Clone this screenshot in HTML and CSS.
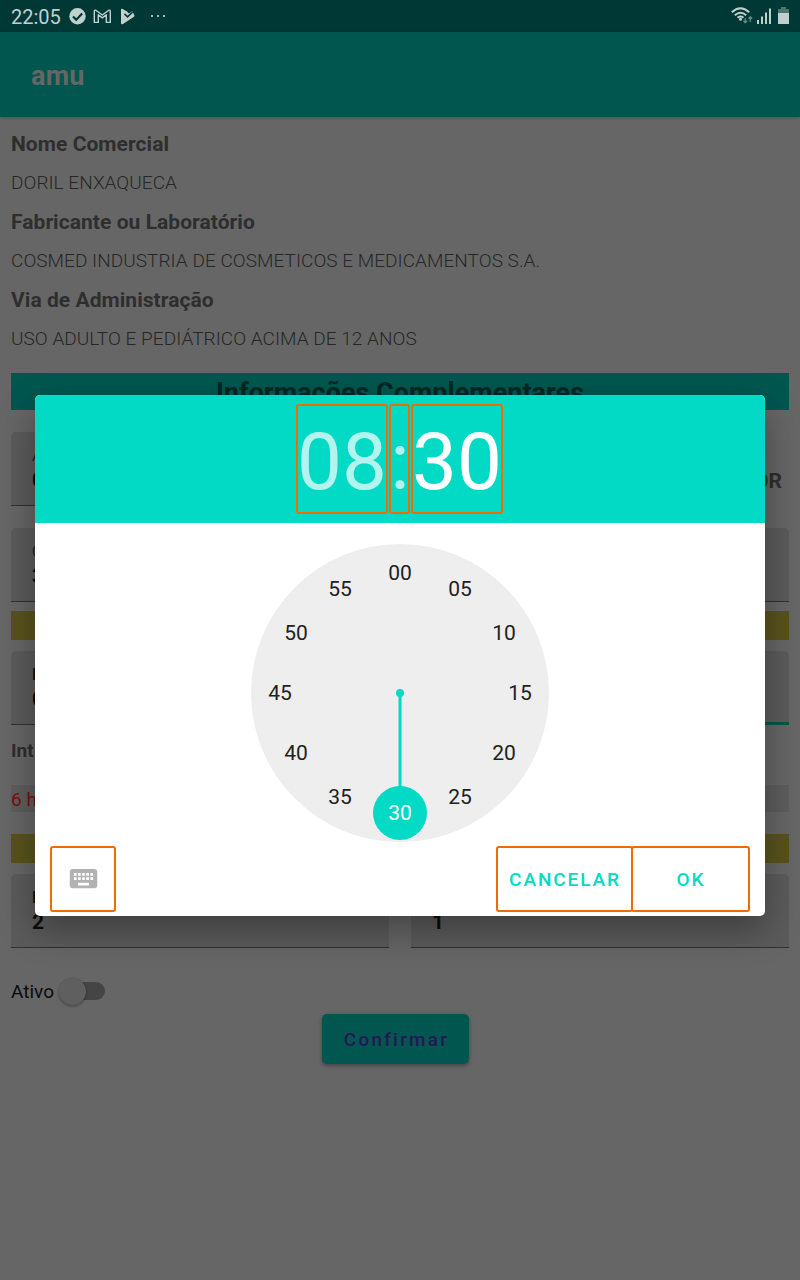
FILE: index.html
```html
<!DOCTYPE html>
<html lang="pt-BR">
<head>
<meta charset="utf-8">
<title>amu</title>
<link rel="stylesheet" href="styles.css">
</head>
<body>
<div class="status">
  <span class="clock-text">22:05</span>
  <svg class="status-left" width="100" height="32" viewBox="0 0 100 32">
    <circle cx="10.5" cy="16.3" r="8.2" fill="#c0d0cf"/>
    <path d="M6 16.5l3.2 3.2 6-6.2" fill="none" stroke="#003835" stroke-width="2.2"/>
    <path d="M27.3 22.4V11.2q0-1.4 1.5-1L35.3 15l6.5-4.8q1.5-.4 1.5 1v11.2h-4v-7.6l-4 3.1-4-3.1v7.6z" fill="none" stroke="#c0d0cf" stroke-width="1.4" stroke-linejoin="round"/>
    <path d="M54 9.3q0-1 1.2-.5L60 11.5l2 2 3.5-2.5 1.5 3.7q1.2 1 0 2L56 24q-2 .8-2-1z" fill="#c0d0cf"/>
    <path d="M57.5 13.9l3 3 5.5-5.2" fill="none" stroke="#003835" stroke-width="1.5"/>
    <path d="M84 15h2v2h-2zM90 15h2v2h-2zM96 15h2v2h-2z" fill="#a4bbb9"/>
  </svg>
  <svg class="status-right" width="60" height="32" viewBox="0 0 60 32">
    <g fill="none" stroke="#c0d0cf" stroke-width="1.9"><path d="M1.8 12.2q8.7-8 17.4 0"/><path d="M4.8 15.2q5.7-5 11.4 0"/><path d="M7.5 17.8q3-2.4 6 0"/></g>
    <circle cx="10.5" cy="19.3" r="1.5" fill="#c0d0cf"/>
    <path d="M15.3 18v4.5M13.5 20.8l1.8 2 1.8-2M20.3 22v-5M18.5 18.7l1.8-2 1.8 2" fill="none" stroke="#668985" stroke-width="1.3"/>
    <path d="M27 20h2v4h-2zM31 16.5h2V24h-2zM35 12.5h2V24h-2zM39 8.5h2V24h-2z" fill="#c0d0cf"/>
    <path d="M51 7h5v2h3v4.5H48V9h3z" fill="#4d7572"/><path d="M48 13h11v11H48z" fill="#c0d0cf"/>
  </svg>
</div>
<header class="appbar">amu</header>
<main class="content">
  <div class="label">Nome Comercial</div>
  <div class="value">DORIL ENXAQUECA</div>
  <div class="label">Fabricante ou Laboratório</div>
  <div class="value">COSMED INDUSTRIA DE COSMETICOS E MEDICAMENTOS S.A.</div>
  <div class="label">Via de Administração</div>
  <div class="value">USO ADULTO E PEDIÁTRICO ACIMA DE 12 ANOS</div>
  <h2 class="section">Informações Complementares</h2>
  <div class="pair">
    <div class="field"><small>A</small><b>0</b></div>
    <div class="side">OR</div>
  </div>
  <div class="field second"><small>Q</small><b>3</b></div>
  <div class="stripe"></div>
  <div class="pair times">
    <div class="field"><small class="strong">I</small><b>0</b></div>
    <div class="field active"></div>
  </div>
  <div class="interval">Int</div>
  <div class="choice">6 h</div>
  <div class="stripe lower"></div>
  <div class="pair doses">
    <div class="field"><small class="strong">I</small><b>2</b></div>
    <div class="field"><b>1</b></div>
  </div>
  <div class="switch-row">Ativo<span class="switch"><span class="track"></span><span class="thumb"></span></span></div>
  <div class="confirm">Confirmar</div>
</main>
<section class="dialog">
  <div class="time">
    <span class="hour box">08</span><span class="colon box">:</span><span class="minute box">30</span>
  </div>
  <svg class="dial" width="300" height="300" viewBox="-150 -150 300 300">
    <circle r="149" fill="#eee"/>
    <path d="M0 0V100" stroke="#03dac5" stroke-width="3"/>
    <circle r="4" fill="#03dac5"/><circle cy="120" r="27" fill="#03dac5"/>
    <g class="numbers" transform="translate(0 -1)">
      <text x="0" y="-112.5">00</text><text x="60" y="-96.5">05</text><text x="104" y="-52.5">10</text>
      <text x="120" y="7.5">15</text><text x="104" y="67.5">20</text><text x="60" y="111.5">25</text>
      <text class="selected" x="0" y="127.5">30</text><text x="-60" y="111.5">35</text><text x="-104" y="67.5">40</text>
      <text x="-120" y="7.5">45</text><text x="-104" y="-52.5">50</text><text x="-60" y="-96.5">55</text>
    </g>
  </svg>
  <div class="actions">
    <div class="box keyboard"><svg width="33" height="33" viewBox="0 0 24 24"><path fill="#b2b2b2" d="M20 5H4c-1.1 0-1.99.9-1.99 2L2 17c0 1.1.9 2 2 2h16c1.1 0 2-.9 2-2V7c0-1.1-.9-2-2-2zm-9 3h2v2h-2V8zm0 3h2v2h-2v-2zM8 8h2v2H8V8zm0 3h2v2H8v-2zm-1 2H5v-2h2v2zm0-3H5V8h2v2zm9 7H8v-2h8v2zm0-4h-2v-2h2v2zm0-3h-2V8h2v2zm3 3h-2v-2h2v2zm0-3h-2V8h2v2z"/></svg></div>
    <div class="box cancel">CANCELAR</div>
    <div class="box ok">OK</div>
  </div>
</section>
</body>
</html>
```
FILE: styles.css
```css
* { box-sizing: border-box; }
body { margin: 0; width: 800px; height: 1280px; overflow: hidden; position: relative; background: #666; font-family: Roboto, sans-serif; }
.status { height: 32px; background: #003835; display: flex; align-items: center; padding: 0 10px 0 11px; color: #c0d0cf; }
.clock-text { font-size: 20px; line-height: 32px; width: 56px; padding-top: 2px; }
.status-right { margin-left: auto; }
.appbar { height: 85px; background: #01574f; color: #666; font-size: 27px; font-weight: 700; letter-spacing: .2px; line-height: 88px; padding-left: 31px; box-shadow: 0 1px 3px #0003; }
.content { padding: 7px 11px 0; }
.label, .value { height: 39px; line-height: 40px; color: #2e2e2e; white-space: nowrap; }
.label { font-size: 21px; font-weight: 700; letter-spacing: .05px; }
.value { font-size: 19px; font-weight: 300; letter-spacing: .04px; color: #262626; }
.section { margin: 15px 0 22px; height: 37px; background: #01574f; color: #012824; font-size: 27px; line-height: 41px; font-weight: 700; text-align: center; }
.pair { display: grid; grid-template-columns: 1fr 1fr; gap: 22px; }
.field { height: 74px; background: #5b5b5b; border-bottom: 1px solid #303030; border-radius: 5px 5px 0 0; padding: 14px 21px 0; color: #0c0c0c; }
.field small { display: block; height: 19px; font-size: 16px; line-height: 19px; color: #242424; }
.field small.strong { font-weight: 700; color: #111; }
.field b { display: block; font-size: 21px; line-height: 30px; }
.side { text-align: right; padding-right: 7px; font-size: 21px; font-weight: 700; line-height: 98px; height: 74px; color: #2e2e2e; }
.second { margin-top: 22px; }
.stripe { height: 29px; background: #58531c; margin: 9px 0 11px; }
.active { border-bottom: 3px solid #01574f; }
.interval { font-size: 19px; line-height: 27px; font-weight: 700; color: #2e2e2e; margin: 12px 0 21px; }
.choice { height: 27px; background: #5d5d5d; color: #800d0d; font-size: 19px; line-height: 29px; }
.lower { margin-top: 22px; }
.doses .field:last-child { padding-top: 33px; }
.switch-row { display: flex; align-items: center; height: 30px; margin-top: 28px; font-size: 19px; color: #0b0b0b; }
.switch { display: flex; align-items: center; margin-left: 5px; padding-left: 27px; }
.track { width: 33px; height: 18px; margin-left: -14px; border-radius: 9px; background: #454545; }
.thumb { width: 27px; height: 27px; margin-left: -46px; border-radius: 50%; background: #5f5f5f; box-shadow: 0 1px 3px #0006; }
.confirm { width: 147px; height: 50px; margin: 8px 0 0 311px; border-radius: 5px; background: #01574f; color: #271657; font-size: 19px; font-weight: 500; letter-spacing: 2.2px; line-height: 52px; text-align: center; text-indent: 2px; box-shadow: 0 2px 4px #0005; }
.dialog { position: absolute; left: 35px; top: 395px; width: 730px; height: 521px; border-radius: 5px; overflow: hidden; background: #fff; box-shadow: 0 14px 36px #0005; }
.box { border: 2px solid #ef6c00; border-radius: 3px; }
.time { height: 128px; padding: 9px 1px 0 0; background: #03dac5; display: flex; justify-content: center; gap: 1px; color: #fff; font-size: 80px; }
.time .box { height: 110px; line-height: 112px; white-space: nowrap; display: flex; justify-content: center; }
.time .hour, .time .minute { width: 92px; }
.time .colon { width: 21px; padding-left: 1px; }
.hour, .colon { color: #b4f4ee; }
.dial { display: block; margin: 20px auto 0; }
.numbers { font-size: 21px; text-anchor: middle; fill: #212121; }
.numbers .selected { fill: #fff; }
.actions { display: flex; margin-top: 3px; padding: 0 15px; height: 66px; }
.actions .box { height: 66px; display: flex; align-items: center; justify-content: center; color: #03dac5; font-size: 19px; font-weight: 500; letter-spacing: 1.9px; padding-left: 1px; }
.actions .keyboard { width: 66px; padding: 0 0 1px; }
.actions .cancel { width: 137px; margin-left: auto; }
.actions .ok { width: 119px; margin-left: -2px; }
```
